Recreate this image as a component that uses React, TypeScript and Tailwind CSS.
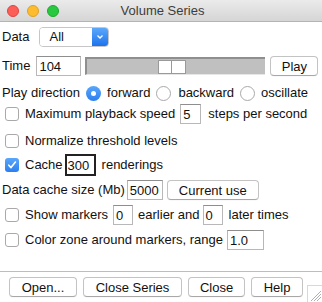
import React from "react";

const TextField = ({ value, w, focused = false }: { value: string; w: string; focused?: boolean }) => (
  <div
    className={
      focused
        ? `${w} h-[22px] bg-white border-2 border-[#222] flex items-center pl-[1px] text-[13px] leading-none`
        : `${w} h-[20px] bg-white border border-[#b8b8b8] border-t-[#8e8e8e] flex items-center pl-[2px] text-[13px] leading-none`
    }
  >
    {value}
  </div>
);

const Button = ({ label, w }: { label: string; w: string }) => (
  <div
    className={`${w} h-[20px] bg-white border border-[#c3c3c3] border-b-[#a8a8a8] rounded-[4px] flex items-center justify-center text-[13px] leading-none shadow-[0_0.5px_0_rgba(0,0,0,0.05)]`}
  >
    {label}
  </div>
);

const Checkbox = ({ checked = false }: { checked?: boolean }) =>
  checked ? (
    <div className="w-[14px] h-[14px] rounded-[3px] bg-gradient-to-b from-[#5aa6fa] to-[#2a7ef0] flex items-center justify-center">
      <svg width="10" height="10" viewBox="0 0 10 10">
        <path d="M1.8 5.2 L4 7.6 L8.4 2" stroke="white" strokeWidth="1.6" fill="none" strokeLinecap="round" strokeLinejoin="round" />
      </svg>
    </div>
  ) : (
    <div className="w-[14px] h-[14px] rounded-[3px] bg-white border border-[#a9a9a9]" />
  );

const Radio = ({ on = false }: { on?: boolean }) =>
  on ? (
    <div className="w-[15px] h-[15px] rounded-full bg-gradient-to-b from-[#5aa6fa] to-[#2a7ef0] flex items-center justify-center">
      <div className="w-[5px] h-[5px] rounded-full bg-white" />
    </div>
  ) : (
    <div className="w-[15px] h-[15px] rounded-full bg-white border border-[#a9a9a9]" />
  );

export default function App() {
  return (
    <div
      className="w-[322px] h-[302px] bg-white text-[13px] text-[#111] relative overflow-hidden"
      style={{ fontFamily: '"Liberation Sans", Arial, sans-serif' }}
    >
      {/* Title bar */}
      <div className="h-[22px] bg-gradient-to-b from-[#ebebeb] to-[#d5d5d5] border-b border-[#b4b4b4] flex items-center relative">
        <div className="flex items-center gap-[8px] pl-[7px]">
          <div className="w-[12px] h-[12px] rounded-full bg-[#fc5f57] border border-[#e0443e]" />
          <div className="w-[12px] h-[12px] rounded-full bg-[#fdbc2e] border border-[#dea123]" />
          <div className="w-[12px] h-[12px] rounded-full bg-[#28c840] border border-[#1aab29]" />
        </div>
        <div className="absolute inset-0 flex items-center justify-center text-[13px] text-[#3d3d3d] pl-[3px]">
          Volume Series
        </div>
      </div>

      {/* Data */}
      <div className="mt-[5px] h-[20px] flex items-center pl-[2px]">
        <span>Data</span>
        <div className="ml-[10px] w-[70px] h-[20px] flex rounded-[4px] border border-[#c6c6c6] overflow-hidden">
          <div className="flex-1 flex items-center pl-[9px] bg-white">All</div>
          <div className="w-[16px] bg-gradient-to-b from-[#5ba8fb] to-[#1d72ec] flex items-center justify-center">
            <svg width="8" height="6" viewBox="0 0 8 6">
              <path d="M1.5 1.5 L4 4 L6.5 1.5" stroke="white" strokeWidth="1.3" fill="none" />
            </svg>
          </div>
        </div>
      </div>

      {/* Time */}
      <div className="mt-[9px] h-[20px] flex items-center pl-[2px]">
        <span>Time</span>
        <div className="ml-[6px]">
          <TextField value="104" w="w-[45px]" />
        </div>
        <div className="ml-[4px] w-[180px] h-[18px] bg-[#c0c0c0] border-t-2 border-l-2 border-[#8f8f8f] border-b border-b-[#e6e6e6] flex items-center pl-[71px]">
          <div className="w-[14px] h-[14px] bg-white border border-[#9a9a9a]" />
          <div className="w-[14px] h-[14px] bg-white border border-[#9a9a9a] border-l-0" />
        </div>
        <div className="ml-[5px]">
          <Button label="Play" w="w-[48px]" />
        </div>
      </div>

      {/* Play direction */}
      <div className="mt-[7px] h-[20px] flex items-center pl-[2px]">
        <span>Play direction</span>
        <div className="ml-[6px]"><Radio on /></div>
        <span className="ml-[6px]">forward</span>
        <div className="ml-[6px]"><Radio /></div>
        <span className="ml-[7px]">backward</span>
        <div className="ml-[6px]"><Radio /></div>
        <span className="ml-[6px]">oscillate</span>
      </div>

      {/* Maximum playback */}
      <div className="mt-[1px] h-[20px] flex items-center pl-[5px]">
        <Checkbox />
        <span className="ml-[6px]">Maximum playback speed</span>
        <div className="ml-[5px]"><TextField value="5" w="w-[21px]" /></div>
        <span className="ml-[7px]">steps per second</span>
      </div>

      {/* Normalize */}
      <div className="mt-[7px] h-[20px] flex items-center pl-[5px]">
        <Checkbox />
        <span className="ml-[6px]">Normalize threshold levels</span>
      </div>

      {/* Cache */}
      <div className="mt-[4px] h-[20px] flex items-center pl-[5px]">
        <Checkbox checked />
        <span className="ml-[6px]">Cache</span>
        <div className="ml-[2px]"><TextField value="300" w="w-[31px]" focused /></div>
        <span className="ml-[6px]">renderings</span>
      </div>

      {/* Data cache size */}
      <div className="mt-[5px] h-[20px] flex items-center pl-[2px]">
        <span>Data cache size (Mb)</span>
        <div className="ml-[2px]"><TextField value="5000" w="w-[36px]" /></div>
        <div className="ml-[4px]"><Button label="Current use" w="w-[92px]" /></div>
      </div>

      {/* Show markers */}
      <div className="mt-[5px] h-[20px] flex items-center pl-[5px]">
        <Checkbox />
        <span className="ml-[6px]">Show markers</span>
        <div className="ml-[5px]"><TextField value="0" w="w-[20px]" /></div>
        <span className="ml-[5px]">earlier and</span>
        <div className="ml-[3px]"><TextField value="0" w="w-[20px]" /></div>
        <span className="ml-[6px]">later times</span>
      </div>

      {/* Color zone */}
      <div className="mt-[5px] h-[20px] flex items-center pl-[5px]">
        <Checkbox />
        <span className="ml-[6px]">Color zone around markers, range</span>
        <div className="ml-[4px]"><TextField value="1.0" w="w-[37px]" /></div>
      </div>

      {/* Separator */}
      <div className="mt-[21px] h-px bg-[#bdbdbd]" />

      {/* Buttons */}
      <div className="mt-[5px] h-[20px] flex items-center pl-[9px] gap-[6px]">
        <Button label="Open..." w="w-[68px]" />
        <Button label="Close Series" w="w-[99px]" />
        <Button label="Close" w="w-[57px]" />
        <Button label="Help" w="w-[52px]" />
      </div>

      {/* Resize grip */}
      <div className="absolute right-0 bottom-0 w-[15px] h-[17px] border-l border-t border-[#d8d8d8] bg-white">
        <svg width="14" height="16" viewBox="0 0 14 16" className="absolute left-0 top-0">
          <path d="M3 15 L13 5 M6 15 L13 8 M9 15 L13 11" stroke="#9a9a9a" strokeWidth="0.8" />
        </svg>
      </div>
    </div>
  );
}
